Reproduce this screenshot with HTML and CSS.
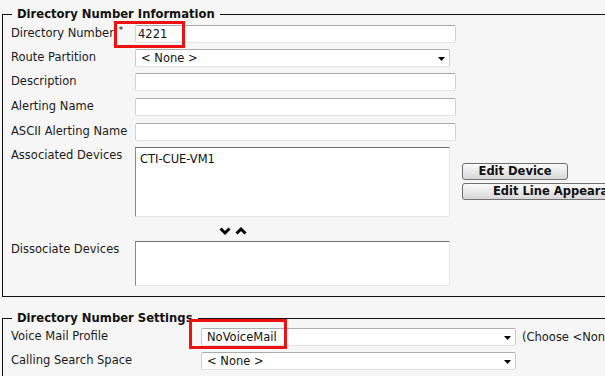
FILE: index.html
```html
<!DOCTYPE html>
<html>
<head>
<meta charset="utf-8">
<link rel="stylesheet" href="styles.css">
</head>
<body>
<fieldset class="box box-info">
  <legend class="legend">Directory Number Information</legend>
  <div class="form form-info">
    <div class="row r24">
      <div class="label">Directory Number<span class="req">*</span></div>
      <div class="field">
        <div class="mark mark-dn"></div>
        <div class="input w321">4221</div>
      </div>
    </div>
    <div class="row r24">
      <div class="label">Route Partition</div>
      <div class="field">
        <div class="select w315"><span>&lt; None &gt;</span><svg class="arrow" width="7" height="4" viewBox="0 0 7 4"><path d="M0 0H7L3.5 4Z" fill="#000"/></svg></div>
      </div>
    </div>
    <div class="row r25">
      <div class="label">Description</div>
      <div class="field"><div class="input w321"></div></div>
    </div>
    <div class="row r25">
      <div class="label">Alerting Name</div>
      <div class="field"><div class="input w321"></div></div>
    </div>
    <div class="row r24">
      <div class="label">ASCII Alerting Name</div>
      <div class="field"><div class="input w321"></div></div>
    </div>
    <div class="row r74">
      <div class="label">Associated Devices</div>
      <div class="field assoc">
        <div class="listbox lb70">CTI-CUE-VM1</div>
        <div class="buttons">
          <div class="btn btn-dev">Edit Device</div>
          <div class="btn btn-line">Edit Line Appearance</div>
        </div>
      </div>
    </div>
    <div class="row r20">
      <div class="label"></div>
      <div class="field chev">
        <svg width="28" height="10" viewBox="0 0 28 10">
          <path d="M1.5 2.5L6 7L10.5 2.5" fill="none" stroke="#000" stroke-width="3"/>
          <path d="M17.5 7.5L22 3L26.5 7.5" fill="none" stroke="#000" stroke-width="3"/>
        </svg>
      </div>
    </div>
    <div class="row r45">
      <div class="label">Dissociate Devices</div>
      <div class="field"><div class="listbox lb45"></div></div>
    </div>
  </div>
</fieldset>

<fieldset class="box box-settings">
  <legend class="legend">Directory Number Settings</legend>
  <div class="form form-settings">
    <div class="row r24">
      <div class="label">Voice Mail Profile</div>
      <div class="field">
        <div class="mark mark-vm"></div>
        <div class="select w315"><span>NoVoiceMail</span><svg class="arrow" width="7" height="4" viewBox="0 0 7 4"><path d="M0 0H7L3.5 4Z" fill="#000"/></svg></div>
        <span class="hint">(Choose &lt;None&gt; to use system default)</span>
      </div>
    </div>
    <div class="row r24">
      <div class="label">Calling Search Space</div>
      <div class="field">
        <div class="select w315"><span>&lt; None &gt;</span><svg class="arrow" width="7" height="4" viewBox="0 0 7 4"><path d="M0 0H7L3.5 4Z" fill="#000"/></svg></div>
      </div>
    </div>
  </div>
</fieldset>
</body>
</html>
```

FILE: styles.css
```css
html, body {
  margin: 0;
  padding: 0;
  background: #f6f6f6;
  overflow: hidden;
  width: 605px;
  height: 376px;
}
body {
  font-family: "DejaVu Sans", Verdana, sans-serif;
  font-size: 11.5px;
  color: #1a1a1a;
}
.box {
  margin: 8px 0 0 2px;
  padding: 4px 0 10px 8px;
  border: 1px solid #111;
  width: 700px;
  box-sizing: border-box;
  min-width: 0;
}
.box-settings {
  margin-top: 15px;
  padding-top: 3px;
}
.legend {
  font-weight: bold;
  font-size: 11.6px;
  line-height: 13px;
  color: #111;
  padding: 0 5px 0 5px;
  margin-left: 1px;
}
.form {
  display: flex;
  flex-direction: column;
}
.row {
  display: flex;
  align-items: flex-start;
}
.r20 { height: 20px; }
.r24 { height: 24px; }
.r25 { height: 25px; }
.r45 { height: 45px; }
.r74 { height: 74px; }
.form-info .label { width: 124px; flex: none; }
.form-settings .label { width: 190px; flex: none; }
.label {
  line-height: 14px;
  padding-top: 1px;
  white-space: nowrap;
}
.req {
  font-size: 9px;
  vertical-align: top;
  position: relative;
  top: -3px;
  margin-left: 5px;
  color: #000;
}
.field {
  position: relative;
  display: flex;
  align-items: center;
}
.input {
  height: 18px;
  box-sizing: border-box;
  background: #fff;
  border: 1px solid;
  border-color: #a9a9a9 #d2d2d2 #e2e3ea #d2d2d2;
  border-radius: 2px;
  padding: 1px 2px 0 2px;
  line-height: 15px;
  color: #111;
}
.w321 { width: 321px; }
.w315 { width: 315px; }
.select {
  height: 18px;
  box-sizing: border-box;
  background: #fff;
  border: 1px solid;
  border-color: #adadad #cbcbcb #e0e0e4 #cbcbcb;
  border-radius: 2px;
  padding: 1px 4px 0 5px;
  line-height: 15px;
  display: flex;
  justify-content: space-between;
  align-items: center;
  color: #111;
}
.select .arrow {
  margin-top: 1px;
}
.listbox {
  width: 315px;
  box-sizing: border-box;
  background: #fff;
  border: 1px solid;
  border-color: #6e6e6e #e6e6e6 #e8e8ea #8a8a8a;
  padding: 4px 4px;
  line-height: 14px;
  color: #111;
}
.lb70 { height: 70px; }
.lb45 { height: 45px; }
.assoc {
  align-items: flex-start;
  gap: 12px;
}
.buttons {
  display: flex;
  flex-direction: column;
  align-items: flex-start;
  gap: 3px;
  padding-top: 16px;
}
.btn {
  height: 17px;
  box-sizing: border-box;
  border: 1px solid #707070;
  border-radius: 3px;
  background: linear-gradient(#fbfbfb, #e6e6e6 60%, #d6d6d6);
  font-weight: bold;
  font-size: 11.5px;
  line-height: 15px;
  text-align: center;
  color: #111;
  white-space: nowrap;
}
.btn-dev { width: 106px; }
.btn-line { width: 200px; }
.chev {
  padding-left: 84px;
  padding-top: 5px;
}
.chev svg { display: block; }
.hint {
  margin-left: 6px;
  white-space: nowrap;
  color: #1a1a1a;
}
.mark {
  position: absolute;
  border: 3px solid #ee1111;
  box-sizing: border-box;
  z-index: 2;
  pointer-events: none;
}
.mark-dn {
  left: -21px;
  top: -4px;
  width: 71px;
  height: 27px;
}
.mark-vm {
  left: -12px;
  top: -9px;
  width: 98px;
  height: 30px;
}
```
